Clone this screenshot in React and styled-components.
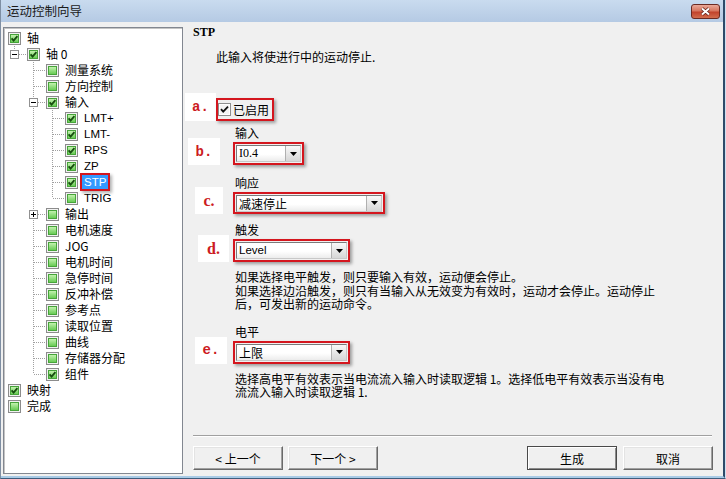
import React from 'react';
import styled, { createGlobalStyle } from 'styled-components';

const CJK = `"Noto Sans CJK SC", "Liberation Sans", sans-serif`;
const LATIN = `"Liberation Sans", "Noto Sans CJK SC", sans-serif`;
const SERIF = `"Liberation Serif", "Noto Sans CJK SC", serif`;
const MONO = `"Liberation Mono", monospace`;

const Global = createGlobalStyle`
  html, body { margin: 0; padding: 0; background: #fff; }
  body { font-family: ${CJK}; font-size: 12px; color: #000; }
  * { box-sizing: border-box; }
`;

const Window = styled.div`
  width: 726px;
  height: 479px;
  display: flex;
  border-left: 1px solid #7f8fa3;
  border-right: 1px solid #cfe0f1;
  border-bottom: 1px solid #3e5d7d;
  overflow: hidden;
`;

const Frame = styled.div`
  flex: 1;
  display: flex;
  flex-direction: column;
  border-right: 2px solid #2e4b6a;
  border-bottom: 2px solid #a9cbe6;
  background: #f0f0f0;
`;

const TitleBar = styled.div`
  height: 22px;
  flex: none;
  display: flex;
  align-items: center;
  justify-content: space-between;
  padding: 0 3px 0 6px;
  background: linear-gradient(#c9dbef, #b5cae4);
`;

const TitleText = styled.span`
  font: 12.5px ${CJK};
  line-height: 22px;
  color: #1a1a1a;
`;

const CloseBtn = styled.div`
  width: 29px;
  height: 15px;
  border: 1px solid #6b2a22;
  border-radius: 3px;
  background: linear-gradient(#eaa898 0%, #d7765f 45%, #c2432c 55%, #d26c4d 100%);
  display: flex;
  align-items: center;
  justify-content: center;
`;

const Body = styled.div`
  flex: 1;
  min-height: 0;
  display: flex;
  padding-left: 2px;
`;

const Tree = styled.div`
  width: 180px;
  flex: none;
  margin: 5px 0 2px 0;
  background: #fff;
  border: 1px solid #828790;
  box-shadow: inset 1px 1px 0 #c4c4c4;
  padding: 2px 0 0 4px;
  overflow: hidden;
`;

const Row = styled.div`
  height: 16px;
  display: flex;
  align-items: center;
  white-space: nowrap;
`;

const Cell = styled.svg`
  flex: none;
  display: block;
`;

const Box = styled.svg`
  flex: none;
  display: block;
  margin-right: 4px;
`;

const Label = styled.span`
  font-family: ${(p) => (p.$latin ? LATIN : CJK)};
  font-size: ${(p) => (p.$latin ? '11.5px' : '12px')};
  line-height: 14px;
  padding: 0 2px;
  color: ${(p) => (p.$selected ? '#fff' : '#000')};
  background: ${(p) => (p.$selected ? '#3399ff' : 'transparent')};
  box-shadow: ${(p) =>
    p.$selected ? '0 0 0 2px #d4161e, 2px 2px 3px 2px rgba(0,0,0,0.3)' : 'none'};
`;

const Content = styled.div`
  flex: 1;
  min-width: 0;
  display: flex;
  flex-direction: column;
  padding-bottom: 2px;
`;

const Heading = styled.div`
  margin: 4px 0 0 10px;
  font: bold 12px ${SERIF};
  line-height: 12px;
`;

const Intro = styled.div`
  margin: 12px 0 0 33px;
  line-height: 14px;
`;

const CheckRow = styled.div`
  display: flex;
  align-items: center;
  margin-top: 29px;
`;

const Badge = styled.div`
  grid-column: 1;
  grid-row: 1 / 3;
  align-self: end;
  width: ${(p) => p.$w}px;
  height: ${(p) => p.$h || 27}px;
  margin-left: ${(p) => p.$ml}px;
  background: #fff;
  display: flex;
  align-items: center;
  justify-content: center;
  color: #cc1b22;
  font-weight: bold;
  font-family: ${(p) => (p.$serif ? SERIF : MONO)};
  font-size: ${(p) => (p.$serif ? '16px' : '14px')};
`;

const RedFrame = styled.div`
  grid-column: 2;
  grid-row: 2;
  display: inline-flex;
  align-items: center;
  align-self: end;
  justify-self: start;
  height: ${(p) => p.$h || 23}px;
  border: 2px solid #d4161e;
  padding: ${(p) => p.$pad || '1px'};
  box-shadow: 2px 2px 3px rgba(0, 0, 0, 0.35);
`;

const Field = styled.div`
  display: grid;
  grid-template-columns: 50px auto;
  grid-template-rows: 14px auto;
  row-gap: 2px;
  justify-content: start;
  margin-top: ${(p) => p.$mt}px;
`;

const FieldLabel = styled.div`
  grid-column: 2;
  grid-row: 1;
  margin-left: 2px;
  line-height: 14px;
`;

const Combo = styled.div`
  width: ${(p) => p.$w}px;
  height: 17px;
  display: flex;
  border: 1px solid;
  border-color: #7a7a7a #c8c8c8 #c8c8c8 #7a7a7a;
  background: linear-gradient(#ffffff 55%, #ececec);
`;

const ComboText = styled.span`
  flex: 1;
  padding-left: 2px;
  font-family: ${(p) => p.$font || CJK};
  font-size: ${(p) => p.$size || '12px'};
  line-height: 15px;
  white-space: nowrap;
  overflow: hidden;
`;

const ComboBtn = styled.span`
  width: 15px;
  flex: none;
  display: flex;
  align-items: center;
  justify-content: center;
  background: linear-gradient(#f8f8f8, #d6d6d6);
  border-left: 1px solid #b0b0b0;
`;

const CheckLabel = styled.span`
  margin-left: 2px;
  line-height: 14px;
`;

const Desc = styled.div`
  margin: ${(p) => p.$mt}px 0 0 52px;
  line-height: ${(p) => p.$lh}px;
  white-space: nowrap;
`;

const Spacer = styled.div`
  flex: 1;
`;

const Separator = styled.div`
  margin: 0 11px 0 10px;
  height: 2px;
  border-top: 1px solid #a0a0a0;
  border-bottom: 1px solid #fff;
`;

const ButtonRow = styled.div`
  display: flex;
  justify-content: space-between;
  margin: 9px 10px 4px 10px;
`;

const ButtonGroup = styled.div`
  display: flex;
  gap: ${(p) => p.$gap}px;
`;

const Btn = styled.button`
  width: 90px;
  height: 24px;
  padding: 0;
  font: 12px ${CJK};
  color: #000;
  background: #f0f0f0;
  border: 1px solid;
  border-color: ${(p) => (p.$def ? '#4a4a4a' : '#fff #696969 #696969 #fff')};
  box-shadow: ${(p) =>
    p.$def
      ? 'inset 1px 1px 0 #fff, inset -1px -1px 0 #8a8a8a'
      : 'inset -1px -1px 0 #a0a0a0, inset 1px 1px 0 #e3e3e3'};
`;

/* ---------- drawings ---------- */

function TreeCheck({ checked }) {
  return (
    <Box width="13" height="13" viewBox="0 0 13 13">
      <defs>
        <linearGradient id="tcg" x1="0" y1="0" x2="0" y2="1">
          <stop offset="0" stopColor="#c8f4b4" />
          <stop offset="1" stopColor="#62c94e" />
        </linearGradient>
      </defs>
      <rect x="0.5" y="0.5" width="12" height="12" fill="#f2f2f2" stroke="#8c8c8c" />
      <rect x="2.5" y="2.5" width="8" height="8" fill="url(#tcg)" stroke="#47a43a" />
      {checked && (
        <path d="M3.6 6.4 L5.6 8.6 L9.4 4.2" fill="none" stroke="#174d10" strokeWidth="1.8" />
      )}
    </Box>
  );
}

function Gutter({ kind, exp }) {
  const dot = { stroke: '#a0a0a0', strokeDasharray: '1 1', shapeRendering: 'crispEdges' };
  return (
    <Cell width="19" height="16" viewBox="0 0 19 16">
      {kind === 'pipe' && <line x1="6.5" y1="0" x2="6.5" y2="16" {...dot} />}
      {kind === 'tee' && <line x1="6.5" y1="0" x2="6.5" y2="16" {...dot} />}
      {kind === 'elbow' && <line x1="6.5" y1="0" x2="6.5" y2="8" {...dot} />}
      {(kind === 'tee' || kind === 'elbow') && <line x1="7" y1="8.5" x2="19" y2="8.5" {...dot} />}
      {exp && (
        <g shapeRendering="crispEdges">
          <rect x="2.5" y="4.5" width="8" height="8" fill="#fff" stroke="#919191" />
          <line x1="4" y1="8.5" x2="9" y2="8.5" stroke="#000" />
          {exp === 'plus' && <line x1="6.5" y1="6" x2="6.5" y2="11" stroke="#000" />}
        </g>
      )}
    </Cell>
  );
}

function WinCheck() {
  return (
    <svg width="13" height="13" viewBox="0 0 13 13" style={{ display: 'block', flex: 'none' }}>
      <rect x="0.5" y="0.5" width="12" height="12" fill="#fff" stroke="#8e8f8f" />
      <rect x="2" y="2" width="9" height="9" fill="#f4f4f4" />
      <path d="M3 6.2 L5.2 8.6 L10 3.6" fill="none" stroke="#111" strokeWidth="1.8" />
    </svg>
  );
}

function Arrow() {
  return (
    <svg width="7" height="4" viewBox="0 0 7 4" style={{ display: 'block' }}>
      <path d="M0 0 H7 L3.5 4 Z" fill="#000" />
    </svg>
  );
}

function Dropdown({ w, text, font, size }) {
  return (
    <Combo $w={w}>
      <ComboText $font={font} $size={size}>{text}</ComboText>
      <ComboBtn>
        <Arrow />
      </ComboBtn>
    </Combo>
  );
}

/* ---------- tree data ---------- */

const TREE = [
  {
    label: '轴',
    checked: true,
    children: [
      {
        label: '轴 0',
        checked: true,
        children: [
          { label: '测量系统' },
          { label: '方向控制' },
          {
            label: '输入',
            checked: true,
            children: [
              { label: 'LMT+', checked: true, latin: true },
              { label: 'LMT-', checked: true, latin: true },
              { label: 'RPS', checked: true, latin: true },
              { label: 'ZP', checked: true, latin: true },
              { label: 'STP', checked: true, latin: true, selected: true },
              { label: 'TRIG', latin: true },
            ],
          },
          { label: '输出', collapsed: true },
          { label: '电机速度' },
          { label: 'JOG' },
          { label: '电机时间' },
          { label: '急停时间' },
          { label: '反冲补偿' },
          { label: '参考点' },
          { label: '读取位置' },
          { label: '曲线' },
          { label: '存储器分配' },
          { label: '组件', checked: true },
        ],
      },
    ],
  },
  { label: '映射', checked: true },
  { label: '完成' },
];

function flatten(nodes, level, cont, out) {
  nodes.forEach((n, i) => {
    const last = i === nodes.length - 1;
    const gutters = cont.map((c) => ({ kind: c ? 'pipe' : 'none' }));
    if (level >= 1) {
      gutters.push({
        kind: last ? 'elbow' : 'tee',
        exp: n.children ? 'minus' : n.collapsed ? 'plus' : null,
      });
    }
    out.push({ ...n, gutters });
    if (n.children) flatten(n.children, level + 1, level >= 1 ? [...cont, !last] : [], out);
  });
  return out;
}

const ROWS = flatten(TREE, 0, [], []);

export default function App() {
  return (
    <>
      <Global />
      <Window>
        <Frame>
          <TitleBar>
            <TitleText>运动控制向导</TitleText>
            <CloseBtn>
              <svg width="11" height="9" viewBox="0 0 11 9">
                <path d="M2 1.5 L9 7.5 M9 1.5 L2 7.5" stroke="#5a1a12" strokeWidth="3.4" />
                <path d="M2 1.5 L9 7.5 M9 1.5 L2 7.5" stroke="#fff" strokeWidth="2" />
              </svg>
            </CloseBtn>
          </TitleBar>
          <Body>
            <Tree>
              {ROWS.map((r, i) => (
                <Row key={i}>
                  {r.gutters.map((g, j) => (
                    <Gutter key={j} kind={g.kind} exp={g.exp} />
                  ))}
                  <TreeCheck checked={r.checked} />
                  <Label $latin={r.latin} $selected={r.selected}>
                    {r.label}
                  </Label>
                </Row>
              ))}
            </Tree>
            <Content>
              <Heading>STP</Heading>
              <Intro>此输入将使进行中的运动停止.</Intro>

              <CheckRow>
                <Badge $w={31} $h={28} $ml={2}>a.</Badge>
                <RedFrame $pad="0 3px 0 0">
                  <WinCheck />
                  <CheckLabel>已启用</CheckLabel>
                </RedFrame>
              </CheckRow>

              <Field $mt={5}>
                <FieldLabel>输入</FieldLabel>
                <Badge $w={32} $ml={5}>b.</Badge>
                <RedFrame>
                  <Dropdown w={65} text="I0.4" font={SERIF} />
                </RedFrame>
              </Field>

              <Field $mt={11}>
                <FieldLabel>响应</FieldLabel>
                <Badge $w={28} $ml={12} $serif>c.</Badge>
                <RedFrame $h={22}>
                  <Dropdown w={146} text="减速停止" />
                </RedFrame>
              </Field>

              <Field $mt={9}>
                <FieldLabel>触发</FieldLabel>
                <Badge $w={31} $ml={15} $serif>d.</Badge>
                <RedFrame>
                  <Dropdown w={111} text="Level" font={LATIN} size="11.5px" />
                </RedFrame>
              </Field>

              <Desc $mt={8} $lh={13.5}>
                如果选择电平触发，则只要输入有效，运动便会停止。
                <br />
                如果选择边沿触发，则只有当输入从无效变为有效时，运动才会停止。运动停止
                <br />
                后，可发出新的运动命令。
              </Desc>

              <Field $mt={14}>
                <FieldLabel>电平</FieldLabel>
                <Badge $w={32} $ml={12}>e.</Badge>
                <RedFrame>
                  <Dropdown w={111} text="上限" />
                </RedFrame>
              </Field>

              <Desc $mt={8.5} $lh={13}>
                选择高电平有效表示当电流流入输入时读取逻辑 1。选择低电平有效表示当没有电
                <br />
                流流入输入时读取逻辑 1.
              </Desc>

              <Spacer />
              <Separator />
              <ButtonRow>
                <ButtonGroup $gap={5}>
                  <Btn>&lt; 上一个</Btn>
                  <Btn>下一个 &gt;</Btn>
                </ButtonGroup>
                <ButtonGroup $gap={6}>
                  <Btn $def>生成</Btn>
                  <Btn>取消</Btn>
                </ButtonGroup>
              </ButtonRow>
            </Content>
          </Body>
        </Frame>
      </Window>
    </>
  );
}
